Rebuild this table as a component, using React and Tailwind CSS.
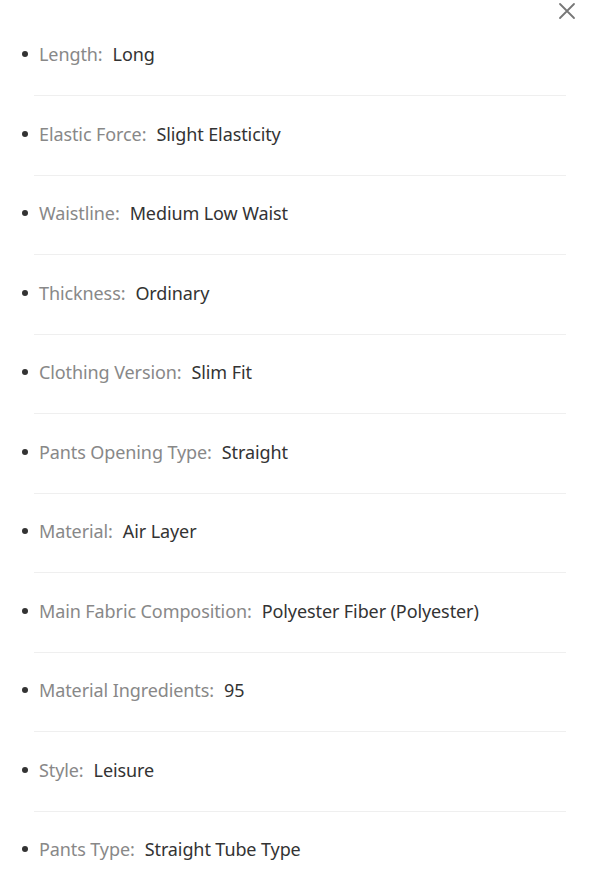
import React from "react";

const items = [
  ["Length", "Long"],
  ["Elastic Force", "Slight Elasticity"],
  ["Waistline", "Medium Low Waist"],
  ["Thickness", "Ordinary"],
  ["Clothing Version", "Slim Fit"],
  ["Pants Opening Type", "Straight"],
  ["Material", "Air Layer"],
  ["Main Fabric Composition", "Polyester Fiber (Polyester)"],
  ["Material Ingredients", "95"],
  ["Style", "Leisure"],
  ["Pants Type", "Straight Tube Type"],
];

export default function App() {
  return (
    <div
      className="relative w-[600px] h-[885px] bg-white overflow-hidden"
      style={{ fontFamily: '"Noto Sans", "Liberation Sans", sans-serif' }}
    >
      <button className="absolute left-[558px] top-[2px] w-[18px] h-[18px] text-[#777]">
        <svg viewBox="0 0 18 18" width="18" height="18" fill="none" stroke="currentColor" strokeWidth="1.8" strokeLinecap="round">
          <path d="M2 2 L16 16 M16 2 L2 16" />
        </svg>
      </button>
      <ul className="pt-[42px] pl-[22px] pr-[34px] flex flex-col gap-[25.5px]">
        {items.map(([k, v], i) => (
          <li key={i} className="flex flex-col">
            <div className="flex items-center h-[24px] text-[18px] leading-[24px] tracking-[-0.1px]">
              <span className="w-[6px] h-[6px] rounded-full bg-[#333] mr-[11px]" />
              <span className="text-[#888]">{k}:</span>
              <span className="ml-[10px] text-[#333]">{v}</span>
            </div>
            {i < items.length - 1 && (
              <div className="ml-[12px] mt-[29px] h-px bg-[#efefef]" />
            )}
          </li>
        ))}
      </ul>
    </div>
  );
}
